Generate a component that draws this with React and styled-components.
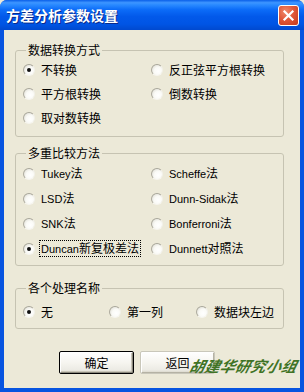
import React, { useState } from 'react';
import styled, { createGlobalStyle } from 'styled-components';

const Global = createGlobalStyle`
  html, body { margin: 0; padding: 0; background: #ECE9D8; }
  * { box-sizing: border-box; }
`;

const Window = styled.div`
  position: relative;
  width: 304px;
  height: 392px;
  display: flex;
  flex-direction: column;
  background: #0754E0;
  border-radius: 7px 7px 0 0;
  overflow: hidden;
  font-family: "Liberation Sans", "Noto Sans CJK SC", sans-serif;
  font-size: 12px;
  color: #000;
`;

const TitleBar = styled.div`
  height: 30px;
  flex: none;
  display: flex;
  align-items: center;
  justify-content: space-between;
  padding: 0 5px 0 6px;
  background: linear-gradient(to bottom, #0A5FE8 0%, #3D95FF 9%, #2A8AFF 16%, #0C6CF8 32%, #0259EA 55%, #0055E5 80%, #0049CF 100%);
`;

const Title = styled.div`
  color: #fff;
  font-family: "Noto Sans CJK SC", sans-serif;
  font-weight: 700;
  font-size: 14px;
  text-shadow: 1px 1px 0 #0A2A8A;
  padding-bottom: 1px;
`;

const CloseButton = styled.div`
  width: 21px;
  height: 21px;
  margin-top: 1px;
  border: 1px solid #fff;
  border-radius: 3px;
  background: radial-gradient(circle at 35% 30%, #F08A6C 0%, #E0583A 45%, #C4391B 100%);
  display: flex;
  align-items: center;
  justify-content: center;
`;

const Client = styled.div`
  flex: 1;
  margin: 0 4px 4px 4px;
  background: #ECE9D8;
  display: flex;
  flex-direction: column;
  padding-top: 13px;
`;

const Group = styled.fieldset`
  margin: ${p => p.$top}px 0 0 11px;
  width: 269px;
  padding: ${p => p.$pad};
  border: 1px solid #C6C3B2;
  border-radius: 3px;
  min-inline-size: 0;
`;

const Legend = styled.legend`
  margin-left: 3px;
  padding: 0 2px;
  font-family: "Noto Sans CJK SC", sans-serif;
  font-size: 12px;
  line-height: 14px;
  height: 14px;
`;

const Grid = styled.div`
  display: grid;
  grid-template-columns: ${p => p.$cols};
  grid-auto-rows: ${p => p.$row}px;
`;

const Option = styled.label`
  display: flex;
  align-items: center;
  gap: 5px;
  white-space: nowrap;
  font-family: "Noto Sans CJK SC", sans-serif;
  font-size: 12px;
  line-height: 14px;
  cursor: default;
`;

const Circle = styled.span`
  flex: none;
  width: 12px;
  height: 12px;
  border-radius: 50%;
  border: 1px solid;
  border-color: #A8A69A #F2F1EA #F6F5EF #ADAB9F;
  background: radial-gradient(circle at 62% 62%, #FFFFFF 0%, #FAFAF6 45%, #D8D6CC 100%);
  display: flex;
  align-items: center;
  justify-content: center;
  &::after {
    content: '';
    width: 4px;
    height: 4px;
    border-radius: 50%;
    background: ${p => (p.$on ? '#111' : 'transparent')};
  }
`;

const Text = styled.span`
  padding: 0 1px;
  outline: ${p => (p.$focus ? '1px dotted #000' : 'none')};
`;

const Latin = styled.span`
  font-family: "Liberation Sans", sans-serif;
  font-size: 11px;
`;

const Buttons = styled.div`
  display: flex;
  gap: 6px;
  margin: 22px 0 0 55px;
`;

const Button = styled.button`
  width: 75px;
  height: 23px;
  padding: 0;
  font-family: "Noto Sans CJK SC", sans-serif;
  font-size: 12px;
  color: #000;
  border-radius: 2px;
  border: 1px solid ${p => (p.$default ? '#000' : '#C9C7BA')};
  background: linear-gradient(to bottom, #FFFFFF 0%, #F6F5F0 50%, #ECEBE4 85%, #D6D3C6 100%);
  box-shadow: ${p => (p.$default
    ? 'inset 1px 1px 0 #fff, inset -1px -1px 0 #8A887C, inset -2px -2px 0 #C8C5B8'
    : 'inset 1px 1px 0 #fff, inset -1px -1px 0 #B5B2A4')};
  cursor: default;
`;

const Watermark = styled.div`
  position: absolute;
  left: 190px;
  top: 355px;
  color: #3F7325;
  font-family: "Noto Sans CJK SC", serif;
  font-size: 15px;
  font-weight: 700;
  font-style: italic;
  letter-spacing: 0.3px;
  transform: skewX(-14deg);
  pointer-events: none;
`;

const Radio = ({ on, focus, onPick, children }) => (
  <Option onClick={onPick}>
    <Circle $on={on} />
    <Text $focus={focus}>{children}</Text>
  </Option>
);

const App = () => {
  const [trans, setTrans] = useState(0);
  const [method, setMethod] = useState(6);
  const [names, setNames] = useState(0);

  const transOpts = ['不转换', '反正弦平方根转换', '平方根转换', '倒数转换', '取对数转换'];
  const methodOpts = [
    ['Tukey', '法'],
    ['Scheffe', '法'],
    ['LSD', '法'],
    ['Dunn-Sidak', '法'],
    ['SNK', '法'],
    ['Bonferroni', '法'],
    ['Duncan', '新复极差法'],
    ['Dunnett', '对照法'],
  ];
  const nameOpts = ['无', '第一列', '数据块左边'];

  return (
    <>
      <Global />
      <Window>
        <TitleBar>
          <Title>方差分析参数设置</Title>
          <CloseButton>
            <svg width="13" height="13" viewBox="0 0 13 13">
              <path d="M2.5 2.5 L10.5 10.5 M10.5 2.5 L2.5 10.5" stroke="#fff" strokeWidth="2.2" strokeLinecap="square" />
            </svg>
          </CloseButton>
        </TitleBar>
        <Client>
          <Group $top={0} $pad="1px 0 6px 7px">
            <Legend>数据转换方式</Legend>
            <Grid $cols="128px 1fr" $row={24}>
              {transOpts.map((t, i) => (
                <Radio key={t} on={trans === i} onPick={() => setTrans(i)}>{t}</Radio>
              ))}
            </Grid>
          </Group>
          <Group $top={9} $pad="1px 0 4px 7px">
            <Legend>多重比较方法</Legend>
            <Grid $cols="128px 1fr" $row={25}>
              {methodOpts.map(([lat, zh], i) => (
                <Radio key={lat} on={method === i} focus={i === 6} onPick={() => setMethod(i)}>
                  <Latin>{lat}</Latin>{zh}
                </Radio>
              ))}
            </Grid>
          </Group>
          <Group $top={15} $pad="5px 0 4px 7px">
            <Legend>各个处理名称</Legend>
            <Grid $cols="86px 87px 1fr" $row={24}>
              {nameOpts.map((n, i) => (
                <Radio key={n} on={names === i} onPick={() => setNames(i)}>{n}</Radio>
              ))}
            </Grid>
          </Group>
          <Buttons>
            <Button $default>确定</Button>
            <Button>返回</Button>
          </Buttons>
        </Client>
        <Watermark>胡建华研究小组</Watermark>
      </Window>
    </>
  );
};

export default App;
